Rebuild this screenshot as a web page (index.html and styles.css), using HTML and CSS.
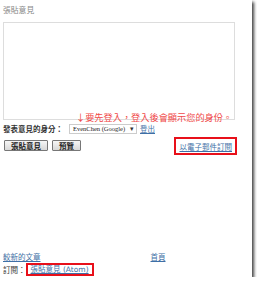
FILE: index.html
```html
<!DOCTYPE html>
<html lang="zh-Hant">
<head>
  <meta charset="UTF-8" />
  <title>張貼意見</title>
  <link rel="stylesheet" href="styles.css">
</head>
<body>
  <div class="shot">
    <div class="comment-box">
      <h4 class="comment-title">張貼意見</h4>
      <div class="editor">
        <textarea class="comment-text"></textarea>
        <span class="note">↓要先登入，登入後會顯示您的身份。</span>
      </div>

      <div class="identity">
        <span class="identity-label">發表意見的身分：</span>
        <span class="select">EvenChen (Google)<span class="caret">▾</span></span>
        <a href="#" class="link">登出</a>
      </div>

      <div class="actions">
        <button class="btn">張貼意見</button>
        <button class="btn">預覽</button>
        <span class="mark mark-mail"><a href="#" class="link">以電子郵件訂閱</a></span>
      </div>
    </div>

    <div class="pager">
      <a href="#" class="link">較新的文章</a>
      <a href="#" class="link home">首頁</a>
    </div>
    <div class="feeds">
      訂閱：<span class="mark mark-feed"><a href="#" class="link">張貼意見 (Atom)</a></span>
    </div>
  </div>
</body>
</html>
```

FILE: styles.css
```css
body {
  margin: 0;
  background: white;
  font-family: "Noto Sans CJK TC", sans-serif;
  font-size: 7.5px;
  color: #333;
}

.shot {
  width: 252px;
  height: 277px;
  background: white;
  box-shadow: 2px 2px 3px rgba(0, 0, 0, 0.75);
  display: flex;
  flex-direction: column;
  padding-left: 3px;
  box-sizing: border-box;
}

.comment-box {
  flex: 1;
}

.comment-title {
  margin: 0;
  padding-top: 5px;
  height: 22px;
  font-size: 7.8px;
  font-weight: normal;
  color: #888;
  line-height: 9px;
  box-sizing: border-box;
}

.editor {
  position: relative;
  height: 98px;
}

.comment-text {
  display: block;
  width: 232px;
  height: 98px;
  margin: 0;
  border: 1px solid #ddd;
  box-sizing: border-box;
  resize: none;
  background: white;
}

.note {
  position: absolute;
  left: 73px;
  top: 90px;
  font-size: 9.2px;
  line-height: 10px;
  color: #f04848;
  white-space: nowrap;
}

.identity {
  display: flex;
  align-items: center;
  height: 17px;
  font-weight: bold;
  color: #333;
}

.identity-label {
  width: 66px;
}

.select {
  display: flex;
  align-items: center;
  justify-content: space-between;
  width: 68px;
  height: 10px;
  box-sizing: border-box;
  border: 1px solid #ccc;
  padding: 0 2px 0 3px;
  font-family: "Liberation Serif", serif;
  font-size: 6.5px;
  font-weight: normal;
  color: #222;
}

.caret {
  font-size: 7px;
  color: #333;
}

.identity .link {
  margin-left: 3px;
  font-weight: normal;
}

.link {
  color: #3e6fa6;
  text-decoration: underline;
}

.actions {
  display: flex;
  align-items: center;
  gap: 4px;
  height: 17px;
}

.btn {
  height: 11px;
  padding: 0 6px;
  margin: 0;
  font-family: inherit;
  font-size: 7.5px;
  font-weight: bold;
  line-height: 9px;
  color: #222;
  border: 1px solid #777;
  border-radius: 1px;
  background: linear-gradient(#f6f6f6, #d8d8d8);
}

.btn:first-child {
  margin-left: 1px;
}

.mark {
  border: 2px solid #e8101a;
  line-height: 9px;
}

.mark-mail {
  margin-left: auto;
  margin-right: 15px;
  padding: 3px 3px 2px 4px;
}

.pager {
  display: flex;
  height: 12px;
  align-items: center;
}

.home {
  margin-left: 110px;
}

.feeds {
  display: flex;
  align-items: center;
  height: 14px;
  margin-bottom: 1px;
}

.mark-feed {
  padding: 0 3px;
  font-family: "DejaVu Sans", "Noto Sans CJK TC", sans-serif;
}
```
